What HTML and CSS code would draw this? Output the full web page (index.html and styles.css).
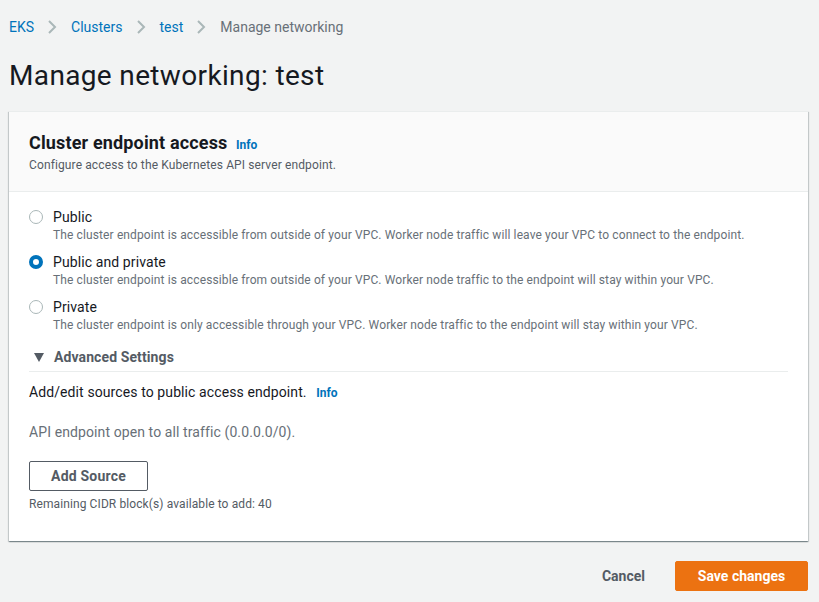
FILE: index.html
```html
<!DOCTYPE html>
<html lang="en">
<head>
<meta charset="utf-8">
<title>Manage networking: test</title>
<link rel="stylesheet" href="styles.css">
</head>
<body>
<main class="page">
  <nav class="breadcrumbs">
    <a class="crumb-link" href="#">EKS</a>
    <svg class="chev" viewBox="0 0 10 16" width="10" height="16"><path d="M2 2l6 6-6 6" fill="none" stroke="#aab7b8" stroke-width="2"/></svg>
    <a class="crumb-link" href="#">Clusters</a>
    <svg class="chev" viewBox="0 0 10 16" width="10" height="16"><path d="M2 2l6 6-6 6" fill="none" stroke="#aab7b8" stroke-width="2"/></svg>
    <a class="crumb-link" href="#">test</a>
    <svg class="chev" viewBox="0 0 10 16" width="10" height="16"><path d="M2 2l6 6-6 6" fill="none" stroke="#aab7b8" stroke-width="2"/></svg>
    <span class="crumb-current">Manage networking</span>
  </nav>

  <h1 class="page-title">Manage networking: test</h1>

  <section class="card">
    <header class="card-header">
      <h2 class="card-title">Cluster endpoint access <a class="info" href="#">Info</a></h2>
      <p class="card-desc">Configure access to the Kubernetes API server endpoint.</p>
    </header>
    <div class="card-body">
      <div class="radio-group">
        <label class="radio">
          <span class="radio-dot"></span>
          <span class="radio-text">
            <span class="radio-label">Public</span>
            <span class="radio-desc">The cluster endpoint is accessible from outside of your VPC. Worker node traffic will leave your VPC to connect to the endpoint.</span>
          </span>
        </label>
        <label class="radio">
          <span class="radio-dot checked"></span>
          <span class="radio-text">
            <span class="radio-label">Public and private</span>
            <span class="radio-desc">The cluster endpoint is accessible from outside of your VPC. Worker node traffic to the endpoint will stay within your VPC.</span>
          </span>
        </label>
        <label class="radio">
          <span class="radio-dot"></span>
          <span class="radio-text">
            <span class="radio-label">Private</span>
            <span class="radio-desc">The cluster endpoint is only accessible through your VPC. Worker node traffic to the endpoint will stay within your VPC.</span>
          </span>
        </label>
      </div>

      <div class="expander">
        <svg class="caret" viewBox="0 0 10 9" width="10" height="9"><path d="M0 0h10L5 9z" fill="#545b64"/></svg>
        <span class="expander-title">Advanced Settings</span>
      </div>

      <p class="sources-title">Add/edit sources to public access endpoint. <a class="info" href="#">Info</a></p>
      <p class="sources-empty">API endpoint open to all traffic (0.0.0.0/0).</p>
      <button class="btn-normal" type="button">Add Source</button>
      <p class="remaining">Remaining CIDR block(s) available to add: 40</p>
    </div>
  </section>

  <footer class="actions">
    <button class="btn-link" type="button">Cancel</button>
    <button class="btn-primary" type="button">Save changes</button>
  </footer>
</main>
</body>
</html>
```

FILE: styles.css
```css
* { box-sizing: border-box; }

html, body {
  margin: 0;
  padding: 0;
  background: #f2f3f3;
}

body {
  font-family: "Roboto", "Noto Sans", "Liberation Sans", sans-serif;
  color: #16191f;
  font-size: 14px;
  line-height: 20px;
}

.page {
  padding: 0 11px 0 9px;
}

.breadcrumbs {
  display: flex;
  align-items: center;
  height: 53px;
  padding-top: 1px;
}

.crumb-link {
  color: #0073bb;
  text-decoration: none;
  font-size: 14px;
}

.chev {
  margin: 0 14px 0 13px;
}

.crumb-current {
  color: #687078;
}

.page-title {
  margin: 0;
  font-size: 28px;
  line-height: 46px;
  font-weight: 400;
  letter-spacing: 0.35px;
  color: #16191f;
  padding-bottom: 12px;
}

.card {
  background: #fff;
  box-shadow: 0 1px 1px 0 rgba(0, 28, 36, 0.3), 1px 1px 1px 0 rgba(0, 28, 36, 0.15), -1px 1px 1px 0 rgba(0, 28, 36, 0.15);
  border-top: 1px solid #eaeded;
}

.card-header {
  background: #fafafa;
  border-bottom: 1px solid #eaeded;
  padding: 20px 20px 18px;
}

.card-title {
  margin: 0;
  font-size: 18px;
  line-height: 22px;
  font-weight: 700;
  letter-spacing: 0.15px;
  color: #16191f;
}

.info {
  color: #0073bb;
  font-size: 12px;
  font-weight: 700;
  letter-spacing: 0;
  text-decoration: none;
  margin-left: 4px;
}

.card-desc {
  margin: 1px 0 0;
  font-size: 12px;
  line-height: 16px;
  letter-spacing: 0.12px;
  color: #545b64;
}

.card-body {
  padding: 15px 20px 29px 20px;
}

.radio-group {
  display: flex;
  flex-direction: column;
  gap: 9px;
}

.radio {
  display: flex;
  align-items: flex-start;
  gap: 10px;
}

.radio-dot {
  flex: none;
  width: 14px;
  height: 14px;
  border-radius: 50%;
  border: 1.5px solid #aab7b8;
  margin-top: 3px;
  background: #fff;
}

.radio-dot.checked {
  border: 4px solid #0073bb;
}

.radio-text {
  display: flex;
  flex-direction: column;
}

.radio-label {
  font-size: 14px;
  line-height: 20px;
  letter-spacing: 0.1px;
  color: #16191f;
}

.radio-desc {
  font-size: 12px;
  line-height: 16px;
  letter-spacing: 0.12px;
  color: #687078;
}

.expander {
  display: flex;
  align-items: center;
  margin-top: 14px;
  padding: 0 0 4px 5px;
  border-bottom: 1px solid #eaeded;
  box-sizing: content-box;
  height: 20px;
}

.caret {
  margin-right: 10px;
}

.expander-title {
  font-weight: 700;
  letter-spacing: 0.1px;
  color: #545b64;
}

.sources-title {
  margin: 10px 0 0;
  letter-spacing: 0.1px;
  color: #16191f;
}

.sources-title .info {
  margin-left: 6px;
}

.sources-empty {
  margin: 19px 0 0;
  letter-spacing: 0.1px;
  color: #687078;
}

.btn-normal {
  display: block;
  margin-top: 19px;
  width: 119px;
  height: 30px;
  border: 1px solid #545b64;
  border-radius: 2px;
  background: #fff;
  font-family: inherit;
  font-size: 14px;
  font-weight: 700;
  letter-spacing: 0.2px;
  color: #545b64;
  padding: 0;
}

.remaining {
  margin: 5px 0 0;
  font-size: 12px;
  line-height: 16px;
  letter-spacing: 0.1px;
  color: #545b64;
}

.actions {
  display: flex;
  justify-content: flex-end;
  align-items: center;
  gap: 10px;
  margin-top: 20px;
}

.btn-link {
  background: none;
  border: none;
  font-family: inherit;
  font-size: 14px;
  font-weight: 700;
  color: #545b64;
  padding: 0 20px;
  height: 30px;
}

.btn-primary {
  background: #ec7211;
  border: 1px solid #ec7211;
  border-radius: 2px;
  color: #fff;
  font-family: inherit;
  font-size: 14px;
  font-weight: 700;
  height: 30px;
  width: 133px;
  padding: 0;
}
```
